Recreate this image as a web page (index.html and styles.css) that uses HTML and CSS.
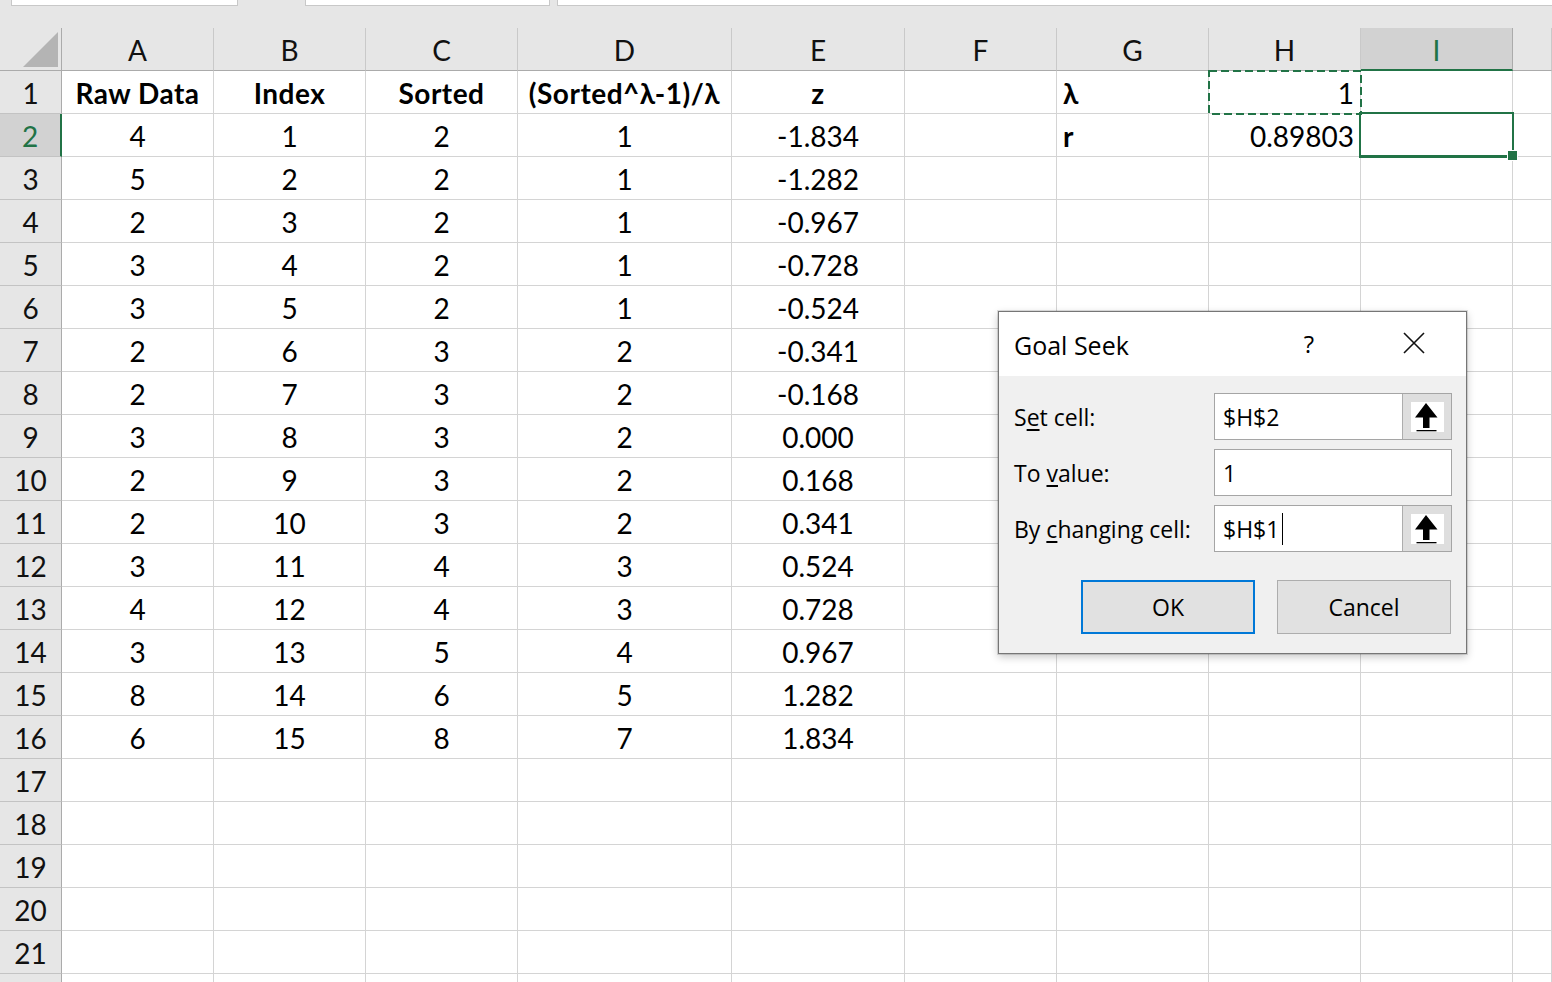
FILE: index.html
```html
<!DOCTYPE html>
<html lang="en">
<head>
<meta charset="utf-8">
<title>Goal Seek</title>
<link rel="stylesheet" href="styles.css">
</head>
<body>
<div class="topbar">
  <div class="fbox fbox-1"></div>
  <div class="fbox fbox-2"></div>
  <div class="fbox fbox-3"></div>
</div>
<div class="sheet">
  <div class="corner"><svg width="62" height="42" viewBox="0 0 62 42"><polygon points="23,39 58,39 58,4" fill="#b4b4b4"/></svg></div>
  <div class="ch">A</div><div class="ch">B</div><div class="ch">C</div><div class="ch">D</div><div class="ch">E</div><div class="ch">F</div><div class="ch">G</div><div class="ch">H</div><div class="ch ch-sel">I</div><div class="ch"></div>

  <div class="rh">1</div><div class="c b">Raw Data</div><div class="c b">Index</div><div class="c b">Sorted</div><div class="c b">(Sorted^λ-1)/λ</div><div class="c b">z</div><div class="c"></div><div class="c b l">λ</div><div class="c rt">1</div><div class="c"></div><div class="c"></div>
  <div class="rh rh-sel">2</div><div class="c">4</div><div class="c">1</div><div class="c">2</div><div class="c">1</div><div class="c">-1.834</div><div class="c"></div><div class="c b l">r</div><div class="c rt">0.89803</div><div class="c"></div><div class="c"></div>
  <div class="rh">3</div><div class="c">5</div><div class="c">2</div><div class="c">2</div><div class="c">1</div><div class="c">-1.282</div><div class="c"></div><div class="c"></div><div class="c"></div><div class="c"></div><div class="c"></div>
  <div class="rh">4</div><div class="c">2</div><div class="c">3</div><div class="c">2</div><div class="c">1</div><div class="c">-0.967</div><div class="c"></div><div class="c"></div><div class="c"></div><div class="c"></div><div class="c"></div>
  <div class="rh">5</div><div class="c">3</div><div class="c">4</div><div class="c">2</div><div class="c">1</div><div class="c">-0.728</div><div class="c"></div><div class="c"></div><div class="c"></div><div class="c"></div><div class="c"></div>
  <div class="rh">6</div><div class="c">3</div><div class="c">5</div><div class="c">2</div><div class="c">1</div><div class="c">-0.524</div><div class="c"></div><div class="c"></div><div class="c"></div><div class="c"></div><div class="c"></div>
  <div class="rh">7</div><div class="c">2</div><div class="c">6</div><div class="c">3</div><div class="c">2</div><div class="c">-0.341</div><div class="c"></div><div class="c"></div><div class="c"></div><div class="c"></div><div class="c"></div>
  <div class="rh">8</div><div class="c">2</div><div class="c">7</div><div class="c">3</div><div class="c">2</div><div class="c">-0.168</div><div class="c"></div><div class="c"></div><div class="c"></div><div class="c"></div><div class="c"></div>
  <div class="rh">9</div><div class="c">3</div><div class="c">8</div><div class="c">3</div><div class="c">2</div><div class="c">0.000</div><div class="c"></div><div class="c"></div><div class="c"></div><div class="c"></div><div class="c"></div>
  <div class="rh">10</div><div class="c">2</div><div class="c">9</div><div class="c">3</div><div class="c">2</div><div class="c">0.168</div><div class="c"></div><div class="c"></div><div class="c"></div><div class="c"></div><div class="c"></div>
  <div class="rh">11</div><div class="c">2</div><div class="c">10</div><div class="c">3</div><div class="c">2</div><div class="c">0.341</div><div class="c"></div><div class="c"></div><div class="c"></div><div class="c"></div><div class="c"></div>
  <div class="rh">12</div><div class="c">3</div><div class="c">11</div><div class="c">4</div><div class="c">3</div><div class="c">0.524</div><div class="c"></div><div class="c"></div><div class="c"></div><div class="c"></div><div class="c"></div>
  <div class="rh">13</div><div class="c">4</div><div class="c">12</div><div class="c">4</div><div class="c">3</div><div class="c">0.728</div><div class="c"></div><div class="c"></div><div class="c"></div><div class="c"></div><div class="c"></div>
  <div class="rh">14</div><div class="c">3</div><div class="c">13</div><div class="c">5</div><div class="c">4</div><div class="c">0.967</div><div class="c"></div><div class="c"></div><div class="c"></div><div class="c"></div><div class="c"></div>
  <div class="rh">15</div><div class="c">8</div><div class="c">14</div><div class="c">6</div><div class="c">5</div><div class="c">1.282</div><div class="c"></div><div class="c"></div><div class="c"></div><div class="c"></div><div class="c"></div>
  <div class="rh">16</div><div class="c">6</div><div class="c">15</div><div class="c">8</div><div class="c">7</div><div class="c">1.834</div><div class="c"></div><div class="c"></div><div class="c"></div><div class="c"></div><div class="c"></div>
  <div class="rh">17</div><div class="c"></div><div class="c"></div><div class="c"></div><div class="c"></div><div class="c"></div><div class="c"></div><div class="c"></div><div class="c"></div><div class="c"></div><div class="c"></div>
  <div class="rh">18</div><div class="c"></div><div class="c"></div><div class="c"></div><div class="c"></div><div class="c"></div><div class="c"></div><div class="c"></div><div class="c"></div><div class="c"></div><div class="c"></div>
  <div class="rh">19</div><div class="c"></div><div class="c"></div><div class="c"></div><div class="c"></div><div class="c"></div><div class="c"></div><div class="c"></div><div class="c"></div><div class="c"></div><div class="c"></div>
  <div class="rh">20</div><div class="c"></div><div class="c"></div><div class="c"></div><div class="c"></div><div class="c"></div><div class="c"></div><div class="c"></div><div class="c"></div><div class="c"></div><div class="c"></div>
  <div class="rh">21</div><div class="c"></div><div class="c"></div><div class="c"></div><div class="c"></div><div class="c"></div><div class="c"></div><div class="c"></div><div class="c"></div><div class="c"></div><div class="c"></div>
  <div class="rh"></div><div class="c"></div><div class="c"></div><div class="c"></div><div class="c"></div><div class="c"></div><div class="c"></div><div class="c"></div><div class="c"></div><div class="c"></div><div class="c"></div>

  <svg class="copy-marquee" width="154" height="45" viewBox="0 0 154 45"><rect x="1" y="1" width="152" height="43" fill="none" stroke="#217346" stroke-width="2" stroke-dasharray="8 4"/></svg>
  <div class="active-cell"></div>
  <div class="fill-handle"></div>
</div>

<div class="dialog">
  <div class="dlg-title">
    <span class="dlg-name">Goal Seek</span>
    <span class="dlg-help">?</span>
    <span class="dlg-close"><svg width="22" height="22" viewBox="0 0 22 22"><path d="M1 1 L21 21 M21 1 L1 21" stroke="#111" stroke-width="1.6" fill="none"/></svg></span>
  </div>
  <div class="dlg-body">
    <div class="dlg-form">
      <label class="dlg-label">S<u>e</u>t cell:</label>
      <div class="dlg-input"><span class="dlg-text">$H$2</span><span class="refbtn"><span class="refbox"><svg width="33" height="30" viewBox="0 0 33 30"><path d="M15 1 L26.5 15.5 L18.5 15.5 L18.5 26 L12 26 L12 15.5 L4 15.5 Z" fill="#000"/><rect x="5.5" y="28" width="20" height="1.3" fill="#000"/></svg></span></span></div>
      <label class="dlg-label">To <u>v</u>alue:</label>
      <div class="dlg-input"><span class="dlg-text">1</span></div>
      <label class="dlg-label">By <u>c</u>hanging cell:</label>
      <div class="dlg-input"><span class="dlg-text">$H$1<span class="caret"></span></span><span class="refbtn"><span class="refbox"><svg width="33" height="30" viewBox="0 0 33 30"><path d="M15 1 L26.5 15.5 L18.5 15.5 L18.5 26 L12 26 L12 15.5 L4 15.5 Z" fill="#000"/><rect x="5.5" y="28" width="20" height="1.3" fill="#000"/></svg></span></span></div>
    </div>
    <div class="dlg-buttons">
      <button class="btn btn-default">OK</button>
      <button class="btn">Cancel</button>
    </div>
  </div>
</div>
</body>
</html>
```
FILE: styles.css
```css
html, body {
  margin: 0;
  padding: 0;
}
body {
  width: 1552px;
  height: 982px;
  overflow: hidden;
  background: #e6e6e6;
  font-family: Lato, "Open Sans", "DejaVu Sans", sans-serif;
  color: #000;
}

/* top strip */
.topbar {
  height: 28px;
  display: flex;
  align-items: flex-start;
}
.fbox {
  height: 6px;
  box-sizing: border-box;
  background: #fff;
  border: 1px solid #c8c8c8;
  border-top: 0;
}
.fbox-1 { margin-left: 11px; width: 227px; }
.fbox-2 { margin-left: 67px; width: 245px; }
.fbox-3 { margin-left: 7px; flex: 1; border-right: 0; }

/* sheet grid */
.sheet {
  position: relative;
  display: grid;
  grid-template-columns: 62px 152px 152px 152px 214px 173px 152px 152px 152px 152px 1fr;
  grid-auto-rows: 43px;
  height: 954px;
  overflow: hidden;
  background: #fff;
}
.sheet > div {
  box-sizing: border-box;
}
.corner {
  background: #e6e6e6;
  border-right: 1px solid #ababab;
  border-bottom: 1px solid #ababab;
}
.corner svg { display: block; }
.ch {
  background: #e6e6e6;
  border-right: 1px solid #c9c9c9;
  border-bottom: 1px solid #ababab;
  text-align: center;
  font-size: 28px;
  line-height: 42px;
  padding-top: 1px;
  color: #111;
}
.ch-sel {
  background: #d2d2d2;
  border-bottom: 2px solid #217346;
  border-right-color: #ababab;
  color: #217346;
}
.rh {
  background: #e6e6e6;
  border-right: 1px solid #ababab;
  border-bottom: 1px solid #c3c3c3;
  text-align: center;
  font-size: 28px;
  line-height: 42px;
  padding-top: 1px;
  color: #111;
}
.rh-sel {
  background: #d2d2d2;
  border-right: 2px solid #217346;
  color: #217346;
}
.c {
  border-right: 1px solid #d4d4d4;
  border-bottom: 1px solid #d4d4d4;
  text-align: center;
  font-size: 28px;
  line-height: 42px;
  padding-top: 1px;
  white-space: nowrap;
  overflow: visible;
}
.b { font-weight: 700; letter-spacing: 0.5px; }
.l { text-align: left; padding-left: 6px; }
.rt { text-align: right; padding-right: 6px; }

/* selection overlays */
.copy-marquee {
  position: absolute;
  left: 1208px;
  top: 42px;
}
.active-cell {
  position: absolute;
  left: 1359px;
  top: 84px;
  width: 155px;
  height: 46px;
  box-sizing: border-box;
  border: 2px solid #217346;
  border-bottom-width: 3px;
}
.fill-handle {
  position: absolute;
  left: 1508px;
  top: 123px;
  width: 9px;
  height: 9px;
  background: #217346;
  box-shadow: 0 0 0 1px #fff;
}

/* dialog */
.dialog {
  position: absolute;
  left: 998px;
  top: 311px;
  width: 469px;
  height: 343px;
  box-sizing: border-box;
  border: 1px solid #767676;
  background: #f0f0f0;
  box-shadow: 0 0 0 1px rgba(0,0,0,0.12), 0 3px 8px rgba(0,0,0,0.22);
  font-family: "Open Sans", "Noto Sans", "DejaVu Sans", sans-serif;
  color: #000;
}
.dlg-title {
  height: 64px;
  background: #fff;
  display: flex;
  align-items: center;
  padding-left: 15px;
  padding-top: 2px;
  box-sizing: border-box;
}
.dlg-name {
  font-size: 25px;
  flex: 1;
}
.dlg-help {
  font-size: 24px;
  width: 40px;
  text-align: center;
  margin-top: -4px;
}
.dlg-close {
  width: 40px;
  margin-left: 65px;
  margin-right: 32px;
  display: flex;
  justify-content: center;
  margin-top: -4px;
}
.dlg-close svg { display: block; }
.dlg-body {
  padding: 17px 14px 0 15px;
}
.dlg-form {
  display: grid;
  grid-template-columns: 1fr 238px;
  grid-auto-rows: 47px;
  row-gap: 9px;
  align-items: center;
}
.dlg-label {
  font-size: 23px;
}
.dlg-label u {
  text-decoration-thickness: 1.5px;
  text-underline-offset: 3px;
}
.dlg-input {
  height: 47px;
  box-sizing: border-box;
  border: 1px solid #a5a5a5;
  background: #fff;
  display: flex;
  align-items: center;
}
.dlg-text {
  flex: 1;
  padding-left: 8px;
  font-size: 23px;
  display: flex;
  align-items: center;
}
.caret {
  display: inline-block;
  width: 1px;
  height: 32px;
  background: #000;
  margin-left: 3px;
}
.refbtn {
  width: 49px;
  align-self: stretch;
  box-sizing: border-box;
  border-left: 1px solid #adadad;
  background: #dedede;
  display: flex;
  align-items: center;
  justify-content: center;
}
.refbox {
  width: 33px;
  height: 30px;
  background: #fff;
}
.refbox svg { display: block; }
.dlg-buttons {
  display: flex;
  justify-content: flex-end;
  gap: 22px;
  margin-top: 28px;
  padding-right: 1px;
}
.btn {
  width: 174px;
  height: 54px;
  box-sizing: border-box;
  background: #e1e1e1;
  border: 1px solid #adadad;
  font-family: "Open Sans", "Noto Sans", "DejaVu Sans", sans-serif;
  font-size: 23px;
  color: #000;
  padding: 0;
}
.btn-default {
  border: 2px solid #0078d7;
}
```
